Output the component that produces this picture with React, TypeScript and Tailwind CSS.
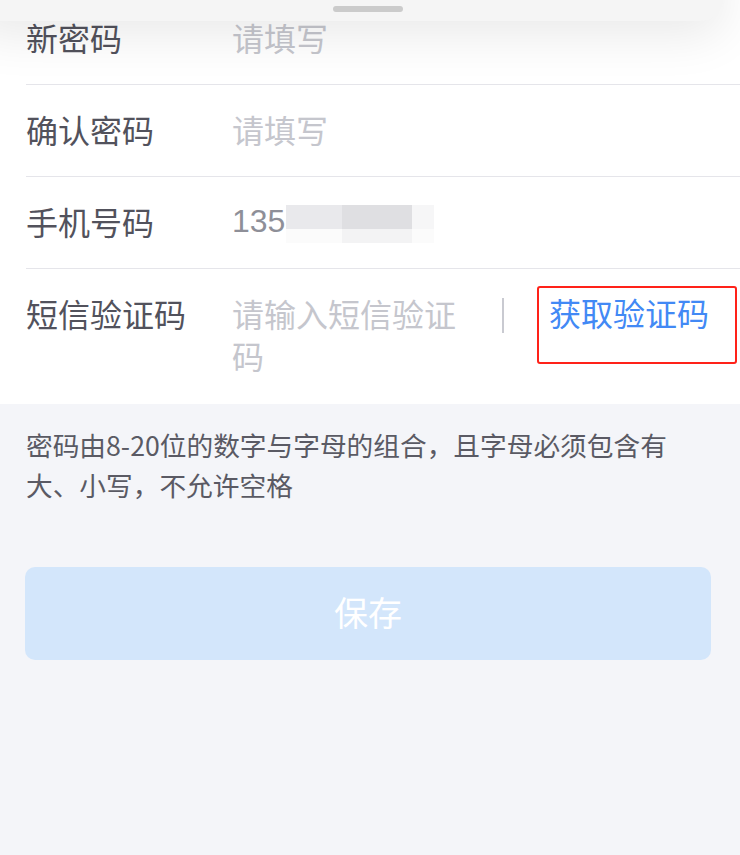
import React from "react";

const Row = ({ label, children }: { label: string; children: React.ReactNode }) => (
  <div className="flex items-center h-[92px] border-b border-[#e5e5ea]">
    <div className="w-[206px] shrink-0 text-[32px] leading-[42px] pb-[4px] text-[#52525c]">{label}</div>
    <div className="text-[32px] leading-[42px] pb-[4px]">{children}</div>
  </div>
);

export default function App() {
  return (
    <div className="relative w-[740px] h-[855px] overflow-hidden bg-[#f4f5f9] font-['Noto_Sans_CJK_SC','Noto_Sans',sans-serif]">
      <div className="bg-white pl-[26px] -mt-[7px]">
        <Row label="新密码">
          <span className="text-[#c5c6cd]">请填写</span>
        </Row>
        <Row label="确认密码">
          <span className="text-[#c5c6cd]">请填写</span>
        </Row>
        <Row label="手机号码">
          <div className="flex items-center">
            <span className="text-[#8e8f98] font-['Liberation_Sans',sans-serif] text-[32px]">135</span>
            <div className="flex flex-col ml-[1px] mt-[6px]">
              <div className="flex h-[24px]">
                <div className="w-[56px] bg-[#e9e9ec]" />
                <div className="w-[70px] bg-[#dfdfe2]" />
                <div className="w-[22px] bg-[#f6f6f7]" />
              </div>
              <div className="flex h-[14px]">
                <div className="w-[56px] bg-[#fbfbfb]" />
                <div className="w-[70px] bg-[#f3f3f4]" />
                <div className="w-[22px] bg-[#fbfbfb]" />
              </div>
            </div>
          </div>
        </Row>
        <div className="flex items-start pt-[23px] h-[135px]">
          <div className="w-[206px] shrink-0 text-[32px] leading-[42px] text-[#52525c]">短信验证码</div>
          <div className="w-[236px] shrink-0 text-[32px] leading-[42px] text-[#c5c6cd]">请输入短信验证码</div>
          <div className="ml-[34px] mt-[6px] w-[2px] h-[35px] bg-[#c9cad1]" />
          <div className="ml-[33px] -mt-[6px] w-[200px] h-[78px] border-2 border-[#ff2219] rounded-[3px] pl-[10px] pt-[3px] text-[32px] leading-[42px] text-[#4289f5] cursor-pointer">
            获取验证码
          </div>
        </div>
      </div>
      <div className="px-[26px] pt-[21px] text-[26.7px] leading-[40px] text-[#5a5a64]">
        密码由8-20位的数字与字母的组合，且字母必须包含有
        <br />
        大、小写，不允许空格
      </div>
      <button className="mt-[62px] ml-[25px] w-[686px] h-[93px] rounded-[10px] bg-[#d3e6fb] text-white text-[34px] pb-[5px] flex items-center justify-center">
        保存
      </button>

      <div className="absolute left-[-30px] right-[16px] top-[-50px] h-[71px] rounded-[24px] bg-[#f5f5f5] shadow-[0_14px_50px_rgba(0,0,0,0.09)]" />
      <div className="absolute left-[333px] top-[6px] w-[70px] h-[6px] rounded-full bg-[#cbcbcb]" />
    </div>
  );
}
